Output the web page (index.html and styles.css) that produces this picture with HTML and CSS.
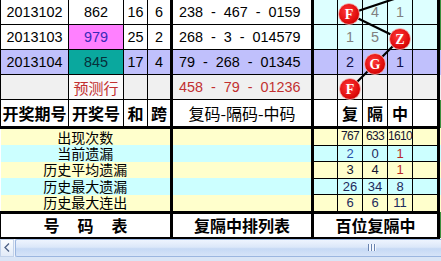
FILE: index.html
```html
<!DOCTYPE html>
<html lang="zh">
<head>
<meta charset="utf-8">
<title>复隔中</title>
<link rel="stylesheet" href="styles.css">
</head>
<body>
<div class="sheet">
  <table class="grid">
    <colgroup>
      <col class="c-qi"><col class="c-hao"><col class="c-he"><col class="c-kua"><col class="c-code">
      <col class="c-g"><col class="c-g"><col class="c-g"><col class="c-g"><col class="c-gl"><col class="c-edge">
    </colgroup>
    <tbody>
      <tr class="d">
        <td class="n">2013102</td>
        <td class="n">862</td>
        <td class="n">16</td>
        <td class="n thick-r">6</td>
        <td class="code thick-r">238 - 467 - 0159</td>
        <td class="g"></td><td class="g"></td><td class="g dim">4</td><td class="g dim">1</td><td class="g thick-r"></td>
        <td class="edge"></td>
      </tr>
      <tr class="d">
        <td class="n">2013103</td>
        <td class="n pink">979</td>
        <td class="n">25</td>
        <td class="n thick-r">2</td>
        <td class="code thick-r">268 - 3 - 014579</td>
        <td class="g"></td><td class="g dim">1</td><td class="g dim">5</td><td class="g"></td><td class="g thick-r"></td>
        <td class="edge"></td>
      </tr>
      <tr class="d blue">
        <td class="n">2013104</td>
        <td class="n teal">845</td>
        <td class="n">17</td>
        <td class="n thick-r">4</td>
        <td class="code thick-r">79 - 268 - 01345</td>
        <td class="g"></td><td class="g">2</td><td class="g"></td><td class="g">1</td><td class="g thick-r"></td>
        <td class="edge"></td>
      </tr>
      <tr class="d pred">
        <td></td>
        <td class="cn red white">预测行</td>
        <td></td>
        <td class="thick-r"></td>
        <td class="code red thick-r">458 - 79 - 01236</td>
        <td class="g"></td><td class="g"></td><td class="g"></td><td class="g"></td><td class="g thick-r"></td>
        <td class="edge"></td>
      </tr>
      <tr class="head">
        <td>开奖期号</td><td>开奖号</td><td>和</td><td class="thick-r">跨</td>
        <td class="thick-r light">复码-隔码-中码</td>
        <td></td><td>复</td><td>隔</td><td>中</td><td class="thick-r"></td>
        <td class="edge"></td>
      </tr>
      <tr class="stat ye">
        <td colspan="4" class="lbl thick-r">出现次数</td>
        <td class="blank thick-r"></td>
        <td class="v"></td><td class="v sm">767</td><td class="v sm">633</td><td class="v sm">1610</td><td class="v thick-r"></td>
        <td class="edge"></td>
      </tr>
      <tr class="stat cy">
        <td colspan="4" class="lbl thick-r">当前遗漏</td>
        <td class="blank thick-r"></td>
        <td class="v"></td><td class="v bl">2</td><td class="v nv">0</td><td class="v rd">1</td><td class="v thick-r"></td>
        <td class="edge"></td>
      </tr>
      <tr class="stat ye">
        <td colspan="4" class="lbl thick-r">历史平均遗漏</td>
        <td class="blank thick-r"></td>
        <td class="v"></td><td class="v">3</td><td class="v">4</td><td class="v rd">1</td><td class="v thick-r"></td>
        <td class="edge"></td>
      </tr>
      <tr class="stat cy">
        <td colspan="4" class="lbl thick-r">历史最大遗漏</td>
        <td class="blank thick-r"></td>
        <td class="v"></td><td class="v nv">26</td><td class="v nv">34</td><td class="v nv">8</td><td class="v thick-r"></td>
        <td class="edge"></td>
      </tr>
      <tr class="stat ye">
        <td colspan="4" class="lbl thick-r">历史最大连出</td>
        <td class="blank thick-r"></td>
        <td class="v"></td><td class="v nv">6</td><td class="v nv">6</td><td class="v nv">11</td><td class="v thick-r"></td>
        <td class="edge"></td>
      </tr>
      <tr class="foot">
        <td colspan="4" class="thick-r"><span class="spread"><span>号</span><span>码</span><span>表</span></span></td>
        <td class="thick-r">复隔中排列表</td>
        <td colspan="5" class="thick-r">百位复隔中</td>
        <td class="edge"></td>
      </tr>
    </tbody>
  </table>
  <svg class="chart" width="441" height="100" viewBox="0 0 441 100" aria-hidden="true">
    <defs>
      <radialGradient id="ball" cx="42%" cy="38%" r="65%">
        <stop offset="0" stop-color="#ff3a3a"/>
        <stop offset="0.75" stop-color="#e00c0c"/>
        <stop offset="1" stop-color="#c80000"/>
      </radialGradient>
    </defs>
    <g stroke="#000" stroke-width="2.2">
      <line x1="349" y1="14" x2="424" y2="-11"/>
      <line x1="349" y1="14" x2="400" y2="39"/>
      <line x1="400" y1="39" x2="375" y2="64"/>
      <line x1="375" y1="64" x2="350" y2="89"/>
    </g>
    <g fill="url(#ball)" stroke="#f4c0c0" stroke-width="0.8">
      <circle cx="349" cy="14" r="10.5"/>
      <circle cx="400" cy="39" r="10.5"/>
      <circle cx="375" cy="64" r="10.5"/>
      <circle cx="350" cy="89" r="10.5"/>
    </g>
    <g class="ball-txt" fill="#fff" text-anchor="middle">
      <text x="349" y="19">F</text>
      <text x="400" y="44">Z</text>
      <text x="375" y="69">G</text>
      <text x="350" y="94">F</text>
    </g>
  </svg>
</div>
<div class="hscroll">
  <div class="arrow">
    <svg width="6" height="9" viewBox="0 0 6 9"><polyline points="5,0.5 1,4.5 5,8.5" fill="none" stroke="#4d6185" stroke-width="1.3"/></svg>
  </div>
  <div class="thumb"><span class="grip"></span></div>
</div>
<div class="status"></div>
</body>
</html>
```

FILE: styles.css
```css
html, body {
  margin: 0;
  padding: 0;
  background: #fff;
}
body {
  width: 441px;
  height: 261px;
  overflow: hidden;
  font-family: "Noto Sans CJK SC", sans-serif;
  color: #000;
}
.sheet {
  position: relative;
}
.grid {
  border-collapse: collapse;
  table-layout: fixed;
  width: 441px;
}
.c-qi { width: 68px; }
.c-hao { width: 55px; }
.c-he { width: 24px; }
.c-kua { width: 24px; }
.c-code { width: 141px; }
.c-g { width: 25px; }
.c-gl { width: 26px; }
.c-edge { width: 3px; }

.grid td {
  border: 1px solid #000;
  padding: 0;
  text-align: center;
  vertical-align: middle;
  white-space: nowrap;
  line-height: 1;
}
.grid td.thick-r { border-right: 3px solid #000; }
.grid td.edge {
  border: 0;
  background: #3e8f3e;
}

/* data rows */
.d td { height: 24px; background: #fff; overflow: hidden; }
.d:first-child td { border-top: 0; }
.n, .code, .g {
  font-family: "Liberation Sans", Arial, sans-serif;
  font-size: 14.4px;
}
.code {
  text-align: left !important;
  padding-left: 6px !important;
  word-spacing: 4px;
}
.d td.g { background: #ddffff; }
.g.dim { color: #808080; }
.d.blue td { background: #c0c0fc; }
.d.blue td.g { background: #c0c0fc; color: #10104a; }
.d td.pink { background: #ff80ff; color: #3a2ab8; }
.d td.teal { background: #0aa89e; color: #06303a; }
.d.pred td, .d.pred td.g { background: #f0f0f0; }
.d.pred td.white { background: #fafafa; }
.red { color: #c23030; }
.cn { font-size: 15px; }

/* header */
.head td {
  height: 26px;
  font-size: 16px;
  font-weight: 700;
  background: #fff;
  border-bottom: 3px solid #000;
}
.head td.light { font-weight: 400; }

/* stat rows */
.stat td { height: 15.5px; font-size: 14px; line-height: 15px; }
.stat.ye td { background: #ffffcc; }
.stat.cy td { background: #ccffff; }
.stat td.lbl,
.stat td.blank {
  border-top: 0;
  border-bottom: 0;
  border-left: 0;
}
.stat td.v {
  font-family: "Liberation Sans", Arial, sans-serif;
  font-size: 13px;
  color: #151530;
}
.stat td.sm { font-size: 12px; letter-spacing: -0.7px; }
.stat td.bl { color: #2850a8; }
.stat td.nv { color: #1c2a5c; }
.stat td.rd { color: #b82828; }

/* footer row */
.foot td {
  height: 23px;
  font-size: 16px;
  font-weight: 700;
  background: #fff;
  border-top: 3px solid #000;
  border-bottom: 2px solid #000;
}
.spread {
  display: inline-flex;
  gap: 18px;
}

/* overlay chart */
.chart {
  position: absolute;
  left: 0;
  top: 0;
  pointer-events: none;
}
.ball-txt {
  font-family: "Liberation Serif", serif;
  font-weight: 700;
  font-size: 14px;
}

/* scroll bar */
.hscroll {
  display: flex;
  height: 18px;
  background: #eef3fb;
}
.arrow {
  width: 14px;
  box-sizing: border-box;
  border: 1px solid #c2d2ea;
  background: linear-gradient(#fbfdff, #e2ebf8);
  display: flex;
  align-items: center;
  justify-content: center;
}
.thumb {
  flex: 1;
  margin-left: 1px;
  box-sizing: border-box;
  border: 1px solid #9bb6e0;
  border-right: 0;
  border-radius: 2px 0 0 2px;
  background: linear-gradient(#eef4fe, #dbe7f9 45%, #c6d9f5 55%, #d6e4f8);
  position: relative;
}
.grip {
  position: absolute;
  left: 352px;
  top: 4px;
  width: 8px;
  height: 7px;
  background: repeating-linear-gradient(90deg, #6a84b0 0 1px, #f4f8ff 1px 3px);
}
.status {
  height: 4px;
  background: #d9e5f6;
}
```
